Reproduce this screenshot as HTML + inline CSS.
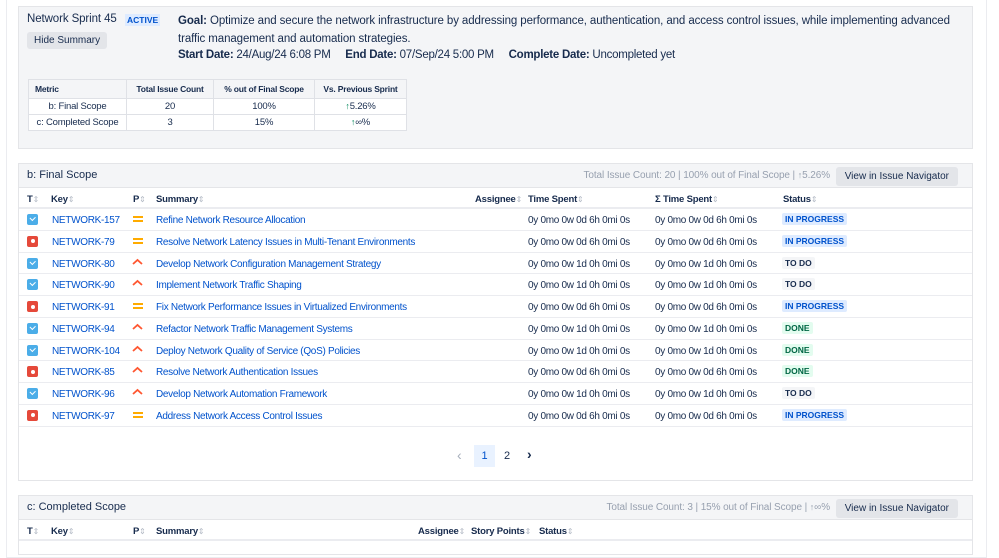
<!DOCTYPE html>
<html><head><style>
*{box-sizing:border-box;margin:0;padding:0}
body{width:999px;height:544px;overflow:hidden;background:#fff;font-family:"Liberation Sans",sans-serif;color:#172b4d;position:relative}
.outer{position:absolute;left:6px;top:-2px;width:981px;height:560px;border:1px solid #ebecf0}
.sum{position:absolute;left:18px;top:6px;width:955px;height:143px;background:#f4f5f7;border:1px solid #e4e5e8}
.abs{position:absolute;white-space:nowrap}
.title{left:8px;top:6px;font-size:11.5px;letter-spacing:-0.1px}
.active{left:106px;top:7px;font-size:8.5px;font-weight:bold;color:#0052cc;background:#deebff;padding:1px 2px}
.hide{left:8px;top:25px;background:#e3e5e9;font-size:10px;padding:3px 7px;border-radius:3px}
.goal{left:159px;top:5px;font-size:11.5px;letter-spacing:-0.1px;line-height:18px;width:780px;white-space:normal}
.dates{left:159px;top:42px;font-size:11.5px;letter-spacing:-0.25px}
table.m{position:absolute;left:9px;top:72px;border-collapse:collapse;font-size:9.5px;background:#fff;table-layout:fixed}
table.m td,table.m th{border:1px solid #dfe1e6;height:16px;padding:0 4px;text-align:center;white-space:nowrap;letter-spacing:-0.2px}
table.m th{background:#f4f5f7;font-weight:bold;font-size:8.5px;height:19px}
.up{color:#00875a;font-size:9px}
.panel{position:absolute;left:18px;width:955px;border:1px solid #e4e5e8;background:#fff}
.ph{height:24px;background:#f4f5f7;border-bottom:1px solid #e4e5e8;position:relative}
.ph .t{position:absolute;left:8px;top:5px;font-size:11px}
.ph .r{position:absolute;right:142px;top:6px;font-size:10px;color:#97a0af;letter-spacing:-0.1px}
.ph .btn{position:absolute;right:14px;top:3px;background:#e3e5e9;font-size:10px;padding:4px 9px;border-radius:3px;color:#172b4d}
.row{position:relative;height:21.75px;border-bottom:1px solid #ebecf0;font-size:10px;letter-spacing:-0.3px}
.row>*{position:absolute;top:6px;white-space:nowrap}
.hdr{font-weight:bold;font-size:9.5px;height:21px;border-bottom:2px solid #ebecf0;letter-spacing:-0.2px}
.hdr span i{font-style:normal;color:#b3bac5;font-weight:normal;font-size:8px}
a{color:#0052cc;text-decoration:none}
.tm{color:#172b4d}
.row .ic{width:11px;height:11px;border-radius:2px;top:5px}
.task{background:#4bade8}
.task:after{content:"";position:absolute;left:3px;top:2px;width:4px;height:2.5px;border-left:1.5px solid #fff;border-bottom:1.5px solid #fff;transform:rotate(-45deg)}
.bug{background:#e5493a}
.bug:after{content:"";position:absolute;left:3.5px;top:3.5px;width:4px;height:4px;border-radius:50%;background:#fff}
.row .med{width:10px;height:6px;border-top:2px solid #ffab00;border-bottom:2px solid #ffab00;top:7px}
.row .high{top:5px}
.row .st{font-size:8.5px;font-weight:bold;padding:1px 3px;border-radius:2px;top:4px;letter-spacing:0}
.ip{background:#deebff;color:#0052cc}
.td{background:#f4f5f7;color:#172b4d}
.dn{background:#e3fcef;color:#006644}
</style></head><body>
<div class="outer"></div>
<div class="sum">
<div class="abs title">Network Sprint 45</div>
<div class="abs active">ACTIVE</div>
<div class="abs hide">Hide Summary</div>
<div class="abs goal"><b>Goal:</b> Optimize and secure the network infrastructure by addressing performance, authentication, and access control issues, while implementing advanced traffic management and automation strategies.</div>
<div class="abs dates"><b>Start Date:</b> 24/Aug/24 6:08 PM &nbsp;&nbsp;&nbsp; <b>End Date:</b> 07/Sep/24 5:00 PM &nbsp;&nbsp;&nbsp; <b>Complete Date:</b> Uncompleted yet</div>
<table class="m">
<colgroup><col style="width:98px"><col style="width:87px"><col style="width:101px"><col style="width:92px"></colgroup>
<tr><th style="text-align:left;padding-left:6px">Metric</th><th>Total Issue Count</th><th>% out of Final Scope</th><th>Vs. Previous Sprint</th></tr>
<tr><td>b: Final Scope</td><td>20</td><td>100%</td><td><span class="up">↑</span>5.26%</td></tr>
<tr><td>c: Completed Scope</td><td>3</td><td>15%</td><td><span class="up">↑</span>∞%</td></tr>
</table>
</div>

<div class="panel" style="top:163px;height:318px">
<div class="ph"><span class="t">b: Final Scope</span><span class="r">Total Issue Count: 20 | 100% out of Final Scope | <span style="font-size:9px">↑</span>5.26%</span><span class="btn">View in Issue Navigator</span></div>
<div class="row hdr"><span style="left:8px">T<i>⇕</i></span><span style="left:32px">Key<i>⇕</i></span><span style="left:114px">P<i>⇕</i></span><span style="left:137px">Summary<i>⇕</i></span><span style="left:456px">Assignee<i>⇕</i></span><span style="left:509px">Time Spent<i>⇕</i></span><span style="left:636px">Σ Time Spent<i>⇕</i></span><span style="left:764px">Status<i>⇕</i></span></div>
<div id="rows"></div>
<div class="abs" style="left:438px;top:283px;font-size:14px;color:#a5adba">‹</div>
<div class="abs" style="left:455px;top:281px;width:21px;height:22px;background:#e9f2ff;color:#0052cc;font-size:11px;text-align:center;line-height:22px">1</div>
<div class="abs" style="left:485px;top:286px;font-size:11px">2</div>
<div class="abs" style="left:508px;top:282px;font-size:14px;font-weight:bold">›</div>
</div>

<div class="panel" style="top:495px;height:60px">
<div class="ph"><span class="t">c: Completed Scope</span><span class="r">Total Issue Count: 3 | 15% out of Final Scope | <span style="font-size:9px">↑</span>∞%</span><span class="btn">View in Issue Navigator</span></div>
<div class="row hdr"><span style="left:8px">T<i>⇕</i></span><span style="left:32px">Key<i>⇕</i></span><span style="left:114px">P<i>⇕</i></span><span style="left:137px">Summary<i>⇕</i></span><span style="left:399px">Assignee<i>⇕</i></span><span style="left:452px">Story Points<i>⇕</i></span><span style="left:520px">Status<i>⇕</i></span></div>
</div>

<script>
var d=[["task","157","med","Refine Network Resource Allocation","0d 6h","ip"],
["bug","79","med","Resolve Network Latency Issues in Multi-Tenant Environments","0d 6h","ip"],
["task","80","high","Develop Network Configuration Management Strategy","1d 0h","td"],
["task","90","high","Implement Network Traffic Shaping","1d 0h","td"],
["bug","91","med","Fix Network Performance Issues in Virtualized Environments","0d 6h","ip"],
["task","94","high","Refactor Network Traffic Management Systems","1d 0h","dn"],
["task","104","high","Deploy Network Quality of Service (QoS) Policies","1d 0h","dn"],
["bug","85","high","Resolve Network Authentication Issues","0d 6h","dn"],
["task","96","high","Develop Network Automation Framework","1d 0h","td"],
["bug","97","med","Address Network Access Control Issues","0d 6h","ip"]];
var L={ip:"IN PROGRESS",td:"TO DO",dn:"DONE"},h="";
d.forEach(function(r){var p=r[2]=="med"?'<span class="med" style="left:114px"></span>':'<svg class="high" style="left:113px" width="11" height="8"><path d="M1 6 L5.5 2 L10 6" stroke="#ff5630" stroke-width="1.8" fill="none"/></svg>';
var t="0y 0mo 0w "+r[4]+" 0mi 0s";
h+='<div class="row"><span class="ic '+r[0]+'" style="left:8px"></span><a style="left:33px">NETWORK-'+r[1]+'</a>'+p+'<a style="left:137px">'+r[3]+'</a><span class="tm" style="left:509px">'+t+'</span><span class="tm" style="left:636px">'+t+'</span><span class="st '+r[5]+'" style="left:763px">'+L[r[5]]+'</span></div>';});
document.getElementById("rows").innerHTML=h;
</script>
</body></html>
